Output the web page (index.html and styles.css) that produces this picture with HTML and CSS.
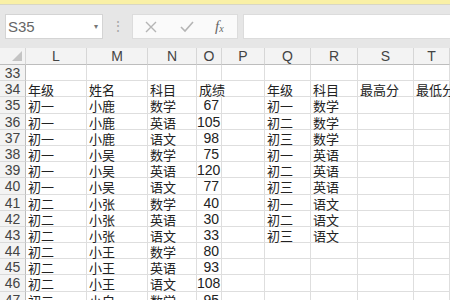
FILE: index.html
```html
<!DOCTYPE html>
<html lang="zh">
<head>
<meta charset="utf-8">
<link rel="stylesheet" href="styles.css">
</head>
<body>
<div class="band"></div>
<div class="toolbar">
  <div class="namebox"><span>S35</span><span class="caret">▾</span></div>
  <div class="grip">⋮</div>
  <div class="fxbox">
    <svg class="ico" width="14" height="14" viewBox="0 0 14 14"><path d="M2 2 L12 12 M12 2 L2 12" stroke="#b5b5b5" stroke-width="1.4" fill="none"/></svg>
    <svg class="ico" width="16" height="14" viewBox="0 0 16 14"><path d="M2 7 L6 11 L14 2" stroke="#b5b5b5" stroke-width="1.6" fill="none"/></svg>
    <span class="fx">f<sub>x</sub></span>
  </div>
  <div class="formula"></div>
</div>
<div class="sheet">
  <div class="hd corner"><span class="tri"></span></div>
  <div class="hd">L</div><div class="hd">M</div><div class="hd">N</div><div class="hd">O</div><div class="hd">P</div><div class="hd">Q</div><div class="hd">R</div><div class="hd">S</div><div class="hd">T</div>

  <div class="rn">33</div><div class="c"></div><div class="c"></div><div class="c"></div><div class="c"></div><div class="c"></div><div class="c"></div><div class="c"></div><div class="c"></div><div class="c"></div>
  <div class="rn">34</div><div class="c">年级</div><div class="c">姓名</div><div class="c">科目</div><div class="c spill">成绩</div><div class="c"></div><div class="c">年级</div><div class="c">科目</div><div class="c">最高分</div><div class="c">最低分</div>
  <div class="rn">35</div><div class="c">初一</div><div class="c">小鹿</div><div class="c">数学</div><div class="c n">67</div><div class="c"></div><div class="c">初一</div><div class="c">数学</div><div class="c"></div><div class="c"></div>
  <div class="rn">36</div><div class="c">初一</div><div class="c">小鹿</div><div class="c">英语</div><div class="c n">105</div><div class="c"></div><div class="c">初二</div><div class="c">数学</div><div class="c"></div><div class="c"></div>
  <div class="rn">37</div><div class="c">初一</div><div class="c">小鹿</div><div class="c">语文</div><div class="c n">98</div><div class="c"></div><div class="c">初三</div><div class="c">数学</div><div class="c"></div><div class="c"></div>
  <div class="rn">38</div><div class="c">初一</div><div class="c">小吴</div><div class="c">数学</div><div class="c n">75</div><div class="c"></div><div class="c">初一</div><div class="c">英语</div><div class="c"></div><div class="c"></div>
  <div class="rn">39</div><div class="c">初一</div><div class="c">小吴</div><div class="c">英语</div><div class="c n">120</div><div class="c"></div><div class="c">初二</div><div class="c">英语</div><div class="c"></div><div class="c"></div>
  <div class="rn">40</div><div class="c">初一</div><div class="c">小吴</div><div class="c">语文</div><div class="c n">77</div><div class="c"></div><div class="c">初三</div><div class="c">英语</div><div class="c"></div><div class="c"></div>
  <div class="rn">41</div><div class="c">初二</div><div class="c">小张</div><div class="c">数学</div><div class="c n">40</div><div class="c"></div><div class="c">初一</div><div class="c">语文</div><div class="c"></div><div class="c"></div>
  <div class="rn">42</div><div class="c">初二</div><div class="c">小张</div><div class="c">英语</div><div class="c n">30</div><div class="c"></div><div class="c">初二</div><div class="c">语文</div><div class="c"></div><div class="c"></div>
  <div class="rn">43</div><div class="c">初二</div><div class="c">小张</div><div class="c">语文</div><div class="c n">33</div><div class="c"></div><div class="c">初三</div><div class="c">语文</div><div class="c"></div><div class="c"></div>
  <div class="rn">44</div><div class="c">初二</div><div class="c">小王</div><div class="c">数学</div><div class="c n">80</div><div class="c"></div><div class="c"></div><div class="c"></div><div class="c"></div><div class="c"></div>
  <div class="rn">45</div><div class="c">初二</div><div class="c">小王</div><div class="c">英语</div><div class="c n">93</div><div class="c"></div><div class="c"></div><div class="c"></div><div class="c"></div><div class="c"></div>
  <div class="rn">46</div><div class="c">初二</div><div class="c">小王</div><div class="c">语文</div><div class="c n">108</div><div class="c"></div><div class="c"></div><div class="c"></div><div class="c"></div><div class="c"></div>
  <div class="rn">47</div><div class="c">初二</div><div class="c">小白</div><div class="c">数学</div><div class="c n">95</div><div class="c"></div><div class="c"></div><div class="c"></div><div class="c"></div><div class="c"></div>
</div>
</body>
</html>
```
FILE: styles.css
```css
html, body {
  margin: 0;
  padding: 0;
  width: 450px;
  height: 300px;
  overflow: hidden;
  background: #ffffff;
  font-family: "Liberation Sans", "Noto Sans CJK SC", sans-serif;
}
.band {
  height: 4px;
  background: #f9f0a6;
  border-bottom: 1px solid #d8d6c4;
}
.toolbar {
  height: 43px;
  box-sizing: border-box;
  background: #e6e6e6;
  display: flex;
  align-items: flex-start;
  padding: 9px 0 0 5px;
}
.namebox {
  width: 98px;
  height: 25px;
  box-sizing: border-box;
  background: #fff;
  border: 1px solid #d4d4d4;
  display: flex;
  align-items: center;
  justify-content: space-between;
  padding: 0 4px 0 2px;
  font-size: 15px;
  color: #666;
}
.caret {
  font-size: 8px;
  color: #777;
}
.grip {
  width: 29px;
  text-align: center;
  color: #a8a8a8;
  font-size: 14px;
  line-height: 25px;
}
.fxbox {
  width: 106px;
  height: 25px;
  box-sizing: border-box;
  background: #fafafa;
  border: 1px solid #dcdcdc;
  display: flex;
  align-items: center;
  padding-left: 11px;
}
.ico { margin-right: 21px; }
.fxbox .ico:nth-child(2) { margin-right: 20px; }
.fx {
  font-family: "Liberation Serif", serif;
  font-style: italic;
  font-size: 15px;
  color: #666;
}
.fx sub { font-size: 10px; vertical-align: -1px; }
.formula {
  flex: 1;
  height: 25px;
  margin-left: 5px;
  background: #fff;
  border: 1px solid #dcdcdc;
  border-right: none;
  box-sizing: border-box;
}
.sheet {
  display: grid;
  grid-template-columns: 26px 61px 61px 49px 25px 43px 46px 47px 56px 36px;
  grid-template-rows: 17px repeat(15, 16.2px);
  width: 450px;
  overflow: hidden;
  background: #fff;
}
.hd {
  background: #f3f3f3;
  border-right: 1px solid #d6d6d6;
  border-bottom: 1px solid #bdbdbd;
  box-sizing: border-box;
  text-align: center;
  font-size: 14px;
  line-height: 16px;
  color: #444;
}
.corner { position: relative; }
.tri {
  position: absolute;
  right: 3px;
  bottom: 3px;
  width: 0;
  height: 0;
  border-left: 10px solid transparent;
  border-bottom: 10px solid #c4c4c4;
}
.rn {
  background: #f3f3f3;
  border-right: 1px solid #bdbdbd;
  border-bottom: 1px solid #dadada;
  box-sizing: border-box;
  font-size: 14px;
  line-height: 17px;
  color: #444;
  text-align: center;
}
.c {
  border-right: 1px solid #dedede;
  border-bottom: 1px solid #dedede;
  box-sizing: border-box;
  font-family: "Noto Sans CJK SC", "Liberation Sans", sans-serif;
  font-size: 13px;
  line-height: 17px;
  color: #222;
  padding-left: 2px;
  white-space: nowrap;
}
.c.spill {
  border-right-color: transparent;
  position: relative;
  z-index: 1;
}
.c.n {
  font-family: "Liberation Sans", sans-serif;
  font-size: 14px;
  line-height: 17px;
  text-align: right;
  padding: 0 2px 0 0;
}
```
